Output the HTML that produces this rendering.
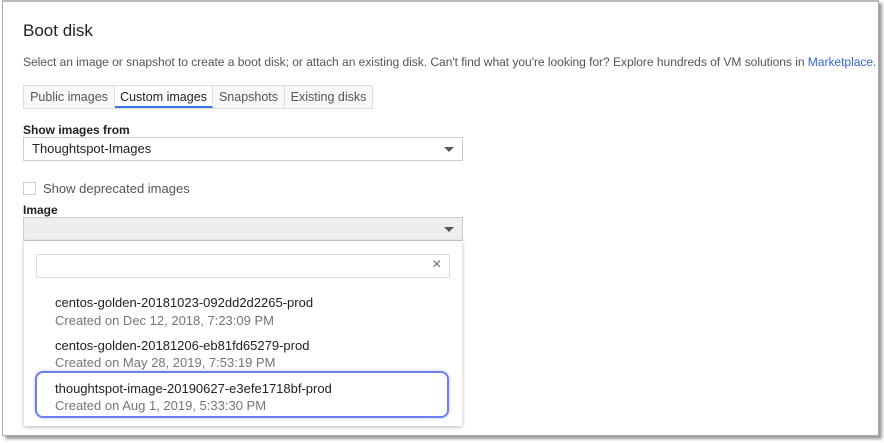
<!DOCTYPE html>
<html><head><style>
*{box-sizing:border-box;margin:0;padding:0}
body{width:884px;height:443px;background:#fff;font-family:"Liberation Sans",sans-serif;position:relative;overflow:hidden;color:#212121}
.frame{position:absolute;left:2px;top:0;width:877px;height:436px;border:1px solid #aaa;border-top:2px solid #bbb;box-shadow:3px 3px 3px rgba(0,0,0,.4);background:#fff}
.a{position:absolute;white-space:nowrap}
.tabs{position:absolute;left:23px;top:85px;height:24px;display:flex;border:1px solid #ddd;background:#f8f8f8}
.tab{font-size:12.5px;color:#555;line-height:22px;border-right:1px solid #ddd;white-space:nowrap;text-align:center;overflow:hidden}
.tab.on{background:#fff;color:#212121;border-bottom:2px solid #3b78e7}
.sel{position:absolute;left:23px;width:440px;height:24px;border:1px solid #ccc;font-size:13px;line-height:22px;padding-left:8px}
.tri{position:absolute;right:8px;top:9px;width:0;height:0;border-left:5px solid transparent;border-right:5px solid transparent;border-top:5px solid #555}
.panel{position:absolute;left:24px;top:241px;width:438px;height:185px;background:#fff;box-shadow:0 1px 4px rgba(0,0,0,.3)}
.it{font-size:13px;color:#212121}
.sub{font-size:13px;color:#757575}
</style></head><body>
<div class="frame"></div>
<div class="a" style="left:23px;top:21px;font-size:17px;color:#212121">Boot disk</div>
<div class="a" style="left:23px;top:55px;font-size:12.1px;letter-spacing:-0.06px;color:#555">Select an image or snapshot to create a boot disk; or attach an existing disk. Can't find what you're looking for? Explore hundreds of VM solutions in <span style="color:#3367d6">Marketplace.</span></div>
<div class="tabs"><div class="tab" style="width:91px">Public images</div><div class="tab on" style="width:98px">Custom images</div><div class="tab" style="width:72px">Snapshots</div><div class="tab" style="width:87px;border-right:none">Existing disks</div></div>
<div class="a" style="left:23px;top:123px;font-size:12px;font-weight:bold">Show images from</div>
<div class="sel" style="top:137px">Thoughtspot-Images<div class="tri"></div></div>
<div class="a" style="left:23px;top:182px;width:13px;height:13px;border:1px solid #ccc"></div>
<div class="a" style="left:43px;top:181px;font-size:13px;color:#555">Show deprecated images</div>
<div class="a" style="left:23px;top:203px;font-size:12px;font-weight:bold">Image</div>
<div class="sel" style="top:217px;background:#eee"><div class="tri"></div></div>
<div class="panel"></div>
<div class="a" style="left:36px;top:254px;width:414px;height:24px;border:1px solid #ddd"></div>
<div class="a" style="left:432px;top:256px;font-size:16px;color:#666">×</div>
<div class="a it" style="left:55px;top:295px">centos-golden-20181023-092dd2d2265-prod</div>
<div class="a sub" style="left:55px;top:313px">Created on Dec 12, 2018, 7:23:09 PM</div>
<div class="a it" style="left:55px;top:338px">centos-golden-20181206-eb81fd65279-prod</div>
<div class="a sub" style="left:55px;top:355px">Created on May 28, 2019, 7:53:19 PM</div>
<div class="a" style="left:35px;top:371px;width:414px;height:47px;border:2px solid #6d7ff0;border-radius:8px;box-shadow:0 0 3px rgba(80,100,240,.4)"></div>
<div class="a it" style="left:55px;top:381px">thoughtspot-image-20190627-e3efe1718bf-prod</div>
<div class="a sub" style="left:55px;top:398px">Created on Aug 1, 2019, 5:33:30 PM</div>
</body></html>
